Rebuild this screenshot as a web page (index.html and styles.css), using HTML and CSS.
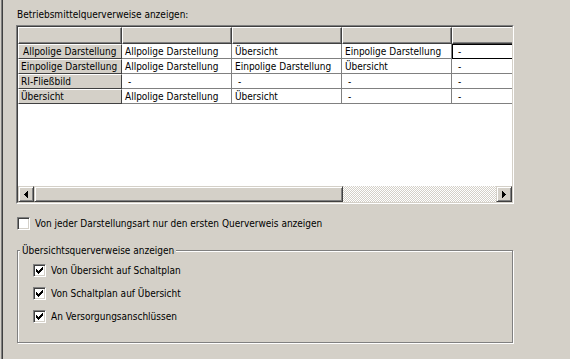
FILE: index.html
```html
<!DOCTYPE html>
<html lang="de">
<head>
  <meta charset="UTF-8">
  <title>Querverweise</title>
  <link rel="stylesheet" href="styles.css">
</head>
<body>

  <div class="seite">
    <div class="titel">Betriebsmittelquerverweise anzeigen:</div>

    <div class="raster">
      <div class="raster-rahmen">
        <div class="raster-inhalt">
          <table class="tabelle">
            <tr class="kopf">
              <th class="ecke"></th>
              <th></th>
              <th></th>
              <th></th>
              <th></th>
            </tr>
            <tr>
              <th class="zeile aktiv">Allpolige Darstellung</th>
              <td>Allpolige Darstellung</td>
              <td>Übersicht</td>
              <td>Einpolige Darstellung</td>
              <td class="strich fokus">-</td>
            </tr>
            <tr>
              <th class="zeile">Einpolige Darstellung</th>
              <td>Allpolige Darstellung</td>
              <td>Einpolige Darstellung</td>
              <td>Übersicht</td>
              <td class="strich">-</td>
            </tr>
            <tr>
              <th class="zeile">RI-Fließbild</th>
              <td class="strich">-</td>
              <td class="strich">-</td>
              <td class="strich">-</td>
              <td class="strich">-</td>
            </tr>
            <tr>
              <th class="zeile">Übersicht</th>
              <td>Allpolige Darstellung</td>
              <td>Übersicht</td>
              <td class="strich">-</td>
              <td class="strich">-</td>
            </tr>
          </table>
        </div>

        <div class="rollbalken">
          <div class="knopf">
            <svg width="4" height="7" viewBox="0 0 4 7" shape-rendering="crispEdges"><path d="M0 3h1v1H0zM1 2h1v3H1zM2 1h1v5H2zM3 0h1v7H3z" fill="#000"/></svg>
          </div>
          <div class="schieber"></div>
          <div class="spur"></div>
          <div class="knopf">
            <svg width="4" height="7" viewBox="0 0 4 7" shape-rendering="crispEdges"><path d="M0 0h1v7H0zM1 1h1v5H1zM2 2h1v3H2zM3 3h1v1H3z" fill="#000"/></svg>
          </div>
        </div>
      </div>
    </div>

    <label class="option einzeln">
      <span class="kasten"></span>
      <span>Von jeder Darstellungsart nur den ersten Querverweis anzeigen</span>
    </label>

    <div class="gruppe">
      <div class="gruppe-titel">Übersichtsquerverweise anzeigen</div>
      <div class="haken-liste">
        <label class="option">
          <span class="kasten">
            <svg width="7" height="7" viewBox="0 0 7 7" shape-rendering="crispEdges"><path d="M0 2h1v3H0zM1 3h1v3H1zM2 4h1v3H2zM3 3h1v3H3zM4 2h1v3H4zM5 1h1v3H5zM6 0h1v3H6z" fill="#000"/></svg>
          </span>
          <span>Von Übersicht auf Schaltplan</span>
        </label>
        <label class="option">
          <span class="kasten">
            <svg width="7" height="7" viewBox="0 0 7 7" shape-rendering="crispEdges"><path d="M0 2h1v3H0zM1 3h1v3H1zM2 4h1v3H2zM3 3h1v3H3zM4 2h1v3H4zM5 1h1v3H5zM6 0h1v3H6z" fill="#000"/></svg>
          </span>
          <span>Von Schaltplan auf Übersicht</span>
        </label>
        <label class="option">
          <span class="kasten">
            <svg width="7" height="7" viewBox="0 0 7 7" shape-rendering="crispEdges"><path d="M0 2h1v3H0zM1 3h1v3H1zM2 4h1v3H2zM3 3h1v3H3zM4 2h1v3H4zM5 1h1v3H5zM6 0h1v3H6z" fill="#000"/></svg>
          </span>
          <span>An Versorgungsanschlüssen</span>
        </label>
      </div>
    </div>
  </div>

</body>
</html>
```

FILE: styles.css
```css
body {
  margin: 0;
  background-color: #d4d0c8;
  font-family: "DejaVu Sans Condensed", "Liberation Sans", sans-serif;
  font-size: 10px;
  line-height: 13px;
  color: #000;
}

.seite {
  margin-left: 1px;
  border-left: 1px solid #808080;
  box-shadow: inset 1px 0 0 #404040;
  min-height: 359px;
  box-sizing: border-box;
  padding: 8px 0 0 14px;
}

.titel {
  height: 13px;
  margin: 0 0 4px 1px;
}

/* Tabelle mit versenktem Rahmen */
.raster {
  width: 498px;
  height: 179px;
  box-sizing: border-box;
  border: 1px solid;
  border-color: #808080 #fff #fff #808080;
}

.raster-rahmen {
  height: 100%;
  box-sizing: border-box;
  border: 1px solid;
  border-color: #404040 #d4d0c8 #d4d0c8 #404040;
  background-color: #fff;
  display: flex;
  flex-direction: column;
}

.raster-inhalt {
  flex: 1;
  overflow: hidden;
}

.tabelle {
  border-collapse: separate;
  border-spacing: 0;
  table-layout: fixed;
  width: 544px;
}

.tabelle th,
.tabelle td {
  box-sizing: border-box;
  padding: 0;
  height: 15px;
  line-height: 13px;
  white-space: nowrap;
  overflow: hidden;
  font-weight: normal;
  text-align: left;
}

.kopf th {
  width: 110px;
  height: 17px;
  background-color: #d4d0c8;
  border-top: 1px solid #fff;
  border-left: 1px solid #fff;
  border-right: 1px solid #404040;
  border-bottom: 1px solid #404040;
  box-shadow: inset -1px -1px 0 #808080;
}

.kopf .ecke {
  width: 104px;
}

.zeile {
  background-color: #d4d0c8;
  border-top: 1px solid #fff;
  border-left: 1px solid #fff;
  border-right: 1px solid #404040;
  border-bottom: 1px solid #404040;
  padding-left: 2px !important;
}

.zeile.aktiv {
  padding-left: 4px !important;
}

.tabelle td {
  border-right: 1px solid #808080;
  border-bottom: 1px solid #808080;
  padding-left: 3px;
}

.tabelle td.strich {
  padding-left: 6px;
}

.tabelle td.fokus {
  outline: 1px solid #000;
  outline-offset: -1px;
}

/* Rollbalken */
.rollbalken {
  height: 16px;
  display: flex;
  background-color: #d4d0c8;
}

.knopf,
.schieber {
  box-sizing: border-box;
  height: 16px;
  background-color: #d4d0c8;
  border: 1px solid;
  border-color: #d4d0c8 #404040 #404040 #d4d0c8;
  box-shadow: inset 1px 1px 0 #fff, inset -1px -1px 0 #808080;
}

.knopf {
  width: 16px;
  display: flex;
  align-items: center;
  justify-content: center;
}

.schieber {
  width: 309px;
}

.spur {
  flex: 1;
  background-image: conic-gradient(#fff 25%, #d4d0c8 0 50%, #fff 0 75%, #d4d0c8 0);
  background-size: 2px 2px;
}

/* Kontrollkästchen */
.option {
  display: flex;
  align-items: center;
  gap: 5px;
  height: 13px;
}

.einzeln {
  margin: 13px 0 0 1px;
}

.kasten {
  width: 13px;
  height: 13px;
  box-sizing: border-box;
  background-color: #fff;
  border: 1px solid;
  border-color: #808080 #fff #fff #808080;
  box-shadow: inset 1px 1px 0 #404040, inset -1px -1px 0 #d4d0c8;
  display: flex;
  align-items: center;
  justify-content: center;
}

.gruppe {
  width: 496px;
  height: 93px;
  box-sizing: border-box;
  margin: 20px 0 0 1px;
  border: 1px solid #808080;
  box-shadow: 1px 1px 0 #fff, inset 1px 1px 0 #fff;
}

.gruppe-titel {
  width: fit-content;
  margin: -7px 0 0 2px;
  padding: 0 2px;
  background-color: #d4d0c8;
}

.haken-liste {
  display: flex;
  flex-direction: column;
  gap: 10px;
  margin-top: 7px;
  padding-left: 15px;
}
```
